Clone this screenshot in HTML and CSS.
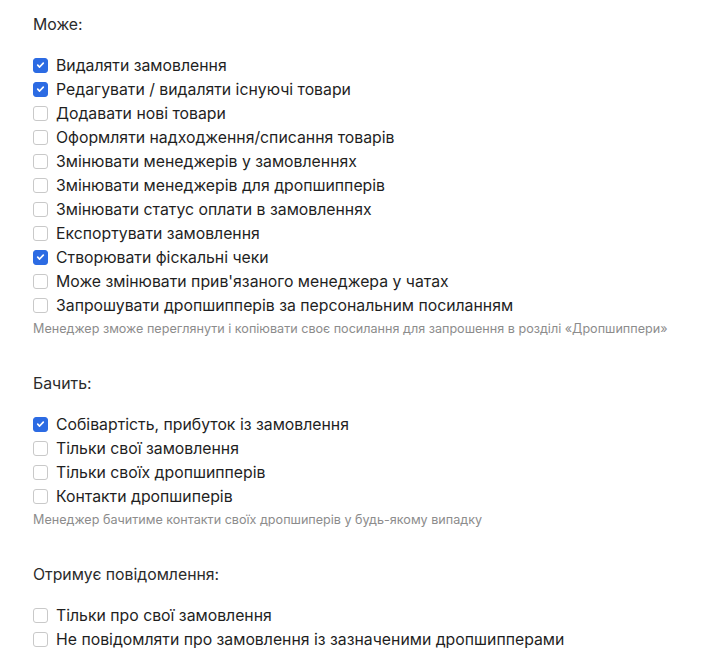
FILE: index.html
```html
<!DOCTYPE html>
<html lang="uk">
<head>
  <meta charset="UTF-8" />
  <meta name="viewport" content="width=device-width, initial-scale=1" />
  <title>Права менеджера</title>
  <link rel="stylesheet" href="styles.css">
</head>
<body>
  <section class="group">
    <h3>Може:</h3>
    <label class="opt"><input type="checkbox" checked /><span class="box"><svg viewBox="0 0 14 14"><path d="M4 7.2l2 2 4-4.2" /></svg></span>Видаляти замовлення</label>
    <label class="opt"><input type="checkbox" checked /><span class="box"><svg viewBox="0 0 14 14"><path d="M4 7.2l2 2 4-4.2" /></svg></span>Редагувати / видаляти існуючі товари</label>
    <label class="opt"><input type="checkbox" /><span class="box"></span>Додавати нові товари</label>
    <label class="opt"><input type="checkbox" /><span class="box"></span>Оформляти надходження/списання товарів</label>
    <label class="opt"><input type="checkbox" /><span class="box"></span>Змінювати менеджерів у замовленнях</label>
    <label class="opt"><input type="checkbox" /><span class="box"></span>Змінювати менеджерів для дропшипперів</label>
    <label class="opt"><input type="checkbox" /><span class="box"></span>Змінювати статус оплати в замовленнях</label>
    <label class="opt"><input type="checkbox" /><span class="box"></span>Експортувати замовлення</label>
    <label class="opt"><input type="checkbox" checked /><span class="box"><svg viewBox="0 0 14 14"><path d="M4 7.2l2 2 4-4.2" /></svg></span>Створювати фіскальні чеки</label>
    <label class="opt"><input type="checkbox" /><span class="box"></span>Може змінювати прив'язаного менеджера у чатах</label>
    <label class="opt"><input type="checkbox" /><span class="box"></span>Запрошувати дропшипперів за персональним посиланням</label>
    <p class="hint">Менеджер зможе переглянути і копіювати своє посилання для запрошення в розділі «Дропшиппери»</p>
  </section>

  <section class="group">
    <h3>Бачить:</h3>
    <label class="opt"><input type="checkbox" checked /><span class="box"><svg viewBox="0 0 14 14"><path d="M4 7.2l2 2 4-4.2" /></svg></span>Собівартість, прибуток із замовлення</label>
    <label class="opt"><input type="checkbox" /><span class="box"></span>Тільки свої замовлення</label>
    <label class="opt"><input type="checkbox" /><span class="box"></span>Тільки своїх дропшипперів</label>
    <label class="opt"><input type="checkbox" /><span class="box"></span>Контакти дропшиперів</label>
    <p class="hint">Менеджер бачитиме контакти своїх дропшиперів у будь-якому випадку</p>
  </section>

  <section class="group">
    <h3>Отримує повідомлення:</h3>
    <label class="opt"><input type="checkbox" /><span class="box"></span>Тільки про свої замовлення</label>
    <label class="opt"><input type="checkbox" /><span class="box"></span>Не повідомляти про замовлення із зазначеними дропшипперами</label>
  </section>
</body>
</html>
```

FILE: styles.css
```css
body {
  margin: 0;
  padding: 13px 33px 0;
  background: #ffffff;
  font-family: Inter, "Noto Sans", sans-serif;
  font-size: 15.8px;
  color: #1f1f1f;
}
.group {
  margin-bottom: 31px;
}
.group h3 {
  margin: 0 0 16px;
  font-size: 15.8px;
  font-weight: 400;
  line-height: 24px;
  color: #2b2b2b;
}
label.opt {
  display: flex;
  align-items: center;
  height: 24px;
  cursor: pointer;
}
label.opt input {
  display: none;
}
.box {
  width: 13px;
  height: 13px;
  flex: none;
  margin-right: 8px;
  border: 1px solid #c9c9c9;
  border-radius: 3px;
  background: #fff;
  display: flex;
  align-items: center;
  justify-content: center;
}
input:checked + .box {
  background: #2c6be3;
  border-color: #2c6be3;
}
.box svg {
  width: 14px;
  height: 14px;
}
.box path {
  fill: none;
  stroke: #ffffff;
  stroke-width: 1.8;
  stroke-linecap: round;
  stroke-linejoin: round;
}
p.hint {
  margin: 0;
  line-height: 24px;
  font-size: 12.6px;
  color: #8c8c8c;
}
```
